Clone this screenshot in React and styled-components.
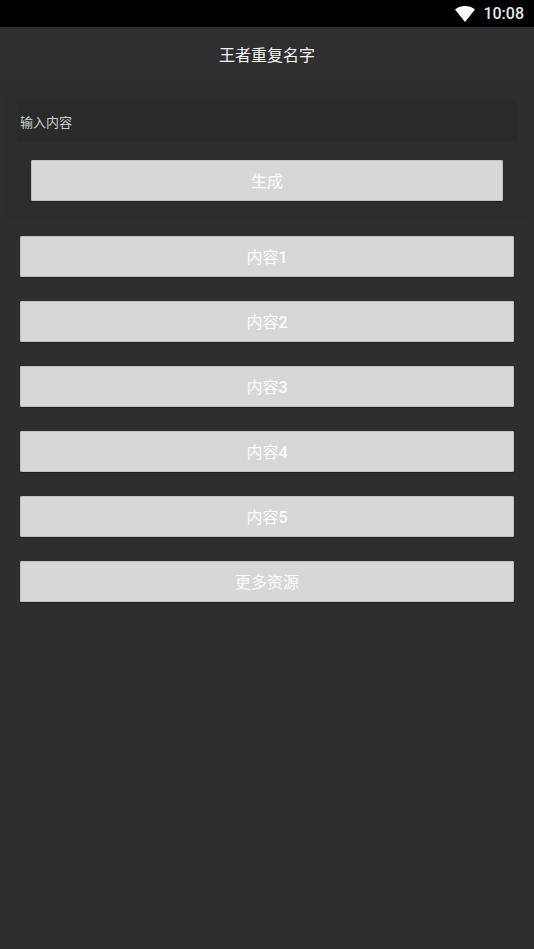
import React from 'react';
import styled, { createGlobalStyle } from 'styled-components';

const GlobalStyle = createGlobalStyle`
  html, body {
    margin: 0;
    padding: 0;
    background: #2e2e2e;
  }
  * {
    box-sizing: border-box;
  }
`;

const fontStack = `Roboto, "Noto Sans CJK SC", sans-serif`;

const Screen = styled.div`
  width: 534px;
  height: 949px;
  background: #2e2e2e;
  font-family: ${fontStack};
  overflow: hidden;
`;

const StatusBar = styled.div`
  height: 27px;
  background: #000;
  color: #e6e6e6;
  display: flex;
  align-items: center;
  justify-content: flex-end;
  padding-right: 10px;
  gap: 8px;
  font-size: 16px;
  font-weight: 500;
`;

const Header = styled.div`
  height: 55px;
  padding-bottom: 2px;
  display: flex;
  align-items: center;
  justify-content: center;
  color: #f4f4f4;
  font-size: 16px;
  background: #2f2f2f;
`;

const Panel = styled.div`
  margin: 7px 5px 0;
  height: 130px;
  padding: 12px 12px 0;
  background: #2d2d2d;
  display: flex;
  flex-direction: column;
`;

const InputBox = styled.div`
  height: 41px;
  background: #2a2a2a;
  color: #cfcfcf;
  font-size: 13px;
  display: flex;
  align-items: center;
  padding: 0 0 1px 3px;
`;

const Button = styled.div`
  height: 41px;
  margin: ${(p) => p.$margin};
  padding-bottom: 2px;
  background: #d6d8d7;
  border-radius: 2px;
  box-shadow: inset 0 0 0 1px #bfc1c0, 0 1px 1px rgba(0, 0, 0, 0.3);
  color: #fbfbfb;
  font-size: 16px;
  display: flex;
  align-items: center;
  justify-content: center;
`;

const Digit = styled.span`
  font-weight: 500;
`;

const List = styled.div`
  margin-top: 17px;
  padding: 0 20px;
  display: flex;
  flex-direction: column;
  gap: 24px;
`;

const items = [
  { label: '内容', num: 1 },
  { label: '内容', num: 2 },
  { label: '内容', num: 3 },
  { label: '内容', num: 4 },
  { label: '内容', num: 5 },
  { label: '更多资源' },
];

export default function App() {
  return (
    <>
      <GlobalStyle />
      <Screen>
        <StatusBar>
          <svg width="20" height="16" viewBox="0 0 20 16">
            <path d="M0 3.4 C5.6 -1.1 14.4 -1.1 20 3.4 L10 16 Z" fill="#fff" />
          </svg>
          <span>10:08</span>
        </StatusBar>
        <Header>王者重复名字</Header>
        <Panel>
          <InputBox>输入内容</InputBox>
          <Button $margin="18px 14px 0">生成</Button>
        </Panel>
        <List>
          {items.map((item) => (
            <Button key={item.label + item.num} $margin="0">
              <span>
                {item.label}
                {item.num && <Digit>{item.num}</Digit>}
              </span>
            </Button>
          ))}
        </List>
      </Screen>
    </>
  );
}
